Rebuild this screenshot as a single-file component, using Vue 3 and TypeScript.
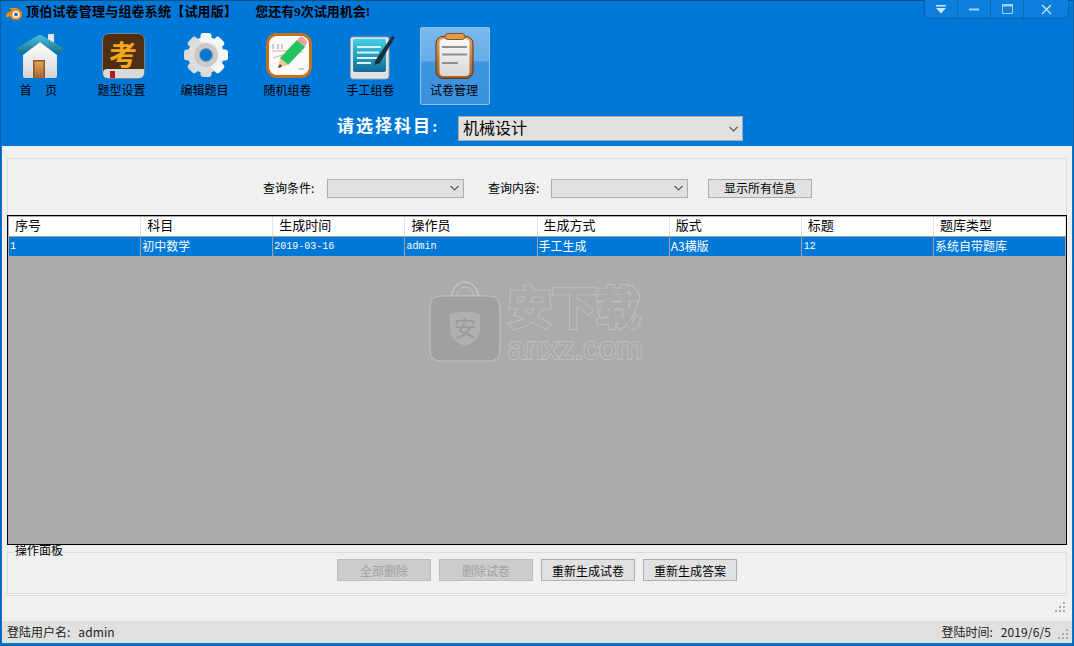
<template>
  <div class="window">
    <header class="head">
      <div class="title-bar">
        <svg class="logo" width="18" height="16" viewBox="0 0 18 16">
          <path d="M1 9 L7 5 L4 3 L10 3 C14 3 17 6 17 9.500 C17 13 14 15 11 15 C8 15 5.500 13.500 5 11 L2.500 12.500 C1 12.500 .5 10 1 9 Z" fill="#f08a12" />
          <circle cx="11" cy="9.500" r="3.500" fill="#fff" />
          <circle cx="11" cy="9.500" r="2" fill="#2a6fb5" />
        </svg>
        <span class="app-name">顶伯试卷管理与组卷系统【试用版】</span>
        <span class="trial">您还有9次试用机会!</span>
        <div class="win-controls">
          <span class="win-btn w32">
            <svg width="12" height="9" viewBox="0 0 12 9"><path d="M1 0h10v1.500H1z" fill="#cfe6fa" /><path d="M1 3h10L6 8.500z" fill="#cfe6fa" /></svg>
          </span>
          <span class="win-btn w32">
            <svg width="10" height="3" viewBox="0 0 10 3"><path d="M0 .5h10v2H0z" fill="#a9d2f3" /></svg>
          </span>
          <span class="win-btn w32">
            <svg width="11" height="10" viewBox="0 0 11 10"><path d="M.5.500h10v9H.5z" fill="none" stroke="#a9d2f3" /><path d="M0 0h11v2.500H0z" fill="#a9d2f3" /></svg>
          </span>
          <span class="win-btn w44">
            <svg width="11" height="11" viewBox="0 0 11 11"><path d="M1 1l9 9M10 1l-9 9" stroke="#cfe6fa" stroke-width="1.300" /></svg>
          </span>
        </div>
      </div>

      <nav class="toolbar">
        <div v-for="item in navItems" :key="item.key" class="tool" :class="{ active: item.key === 'paper' }">
          <svg v-if="item.key === 'home'" class="tool-icon" viewBox="0 0 48 48">
            <defs>
              <linearGradient id="roof" x1="0" y1="0" x2="0" y2="1"><stop offset="0" stop-color="#4fc3dc" /><stop offset="1" stop-color="#0d6a86" /></linearGradient>
              <linearGradient id="wall" x1="0" y1="0" x2="0" y2="1"><stop offset="0" stop-color="#ffffff" /><stop offset="1" stop-color="#d4d4d4" /></linearGradient>
              <linearGradient id="door" x1="0" y1="0" x2="0" y2="1"><stop offset="0" stop-color="#e2a35a" /><stop offset="1" stop-color="#a8642a" /></linearGradient>
            </defs>
            <path d="M32 1h6v14h-6z" fill="#e6e6e6" />
            <path d="M7 22 L24 9 L41 22 V43 Q41 45 39 45 H9 Q7 45 7 43 Z" fill="url(#wall)" />
            <path d="M17 27h12v18H17z" fill="#8c5a2c" />
            <path d="M18.500 28.500h9V45h-9z" fill="url(#door)" />
            <path d="M1 15 L22 2.500 Q24 1.500 26 2.500 L47 15 Q48 17 46 19 L43 22 L24 9 L5 22 L2 19 Q0 17 1 15 Z" fill="url(#roof)" />
          </svg>

          <svg v-else-if="item.key === 'types'" class="tool-icon" viewBox="0 0 48 48">
            <rect x="3" y="0" width="43" height="46" rx="8" fill="#7a8794" />
            <path d="M4 8 Q4 1 10 1 H39 Q45 1 45 8 V36 H4 Z" fill="#4e2f12" />
            <path d="M4 35 H45 V40 Q45 45 40 45 H9 Q4 45 4 40 Z" fill="#d8d8d8" />
            <path d="M4 40 Q4 36 8 36 H45 V34 H4 Z" fill="#4e2f12" />
            <path d="M11 38h5v7h-5z" fill="#b01f1f" />
            <text x="24" y="33" text-anchor="middle" class="kao">考</text>
          </svg>

          <svg v-else-if="item.key === 'edit'" class="tool-icon" viewBox="0 0 48 48">
            <defs>
              <linearGradient id="gear" x1="0" y1="0" x2="0" y2="1"><stop offset="0" stop-color="#fafafa" /><stop offset="1" stop-color="#d8d8d8" /></linearGradient>
            </defs>
            <g fill="url(#gear)">
              <circle cx="24" cy="22" r="18" />
              <rect x="18.500" y="0" width="11" height="44" rx="3" />
              <rect x="18.500" y="0" width="11" height="44" rx="3" transform="rotate(45 24 22)" />
              <rect x="18.500" y="0" width="11" height="44" rx="3" transform="rotate(90 24 22)" />
              <rect x="18.500" y="0" width="11" height="44" rx="3" transform="rotate(135 24 22)" />
            </g>
            <circle cx="24" cy="22" r="12" fill="#cacaca" />
            <circle cx="24" cy="22" r="6.500" fill="#0078d7" stroke="#9a9a9a" />
          </svg>

          <svg v-else-if="item.key === 'random'" class="tool-icon" viewBox="0 0 48 48">
            <rect x="1" y="0" width="46" height="45" rx="11" fill="#c46f1d" />
            <rect x="4" y="3" width="40" height="39" rx="8" fill="#fafafa" />
            <path d="M7 18h16M8 25q10-4 30-6" stroke="#e8a0a0" stroke-width="1" fill="none" />
            <path d="M8 11v5M13 11v5M17 11v5M38 13v3M34 36h5" stroke="#999" stroke-width="1" />
            <path d="M15 25 L32 7 L40 14 L23 32 Z" fill="#22c45e" />
            <path d="M32 7 L35 4 Q37 3 39 5 L42 8 Q43 10 41 11 L40 14 Z" fill="#f0a0a0" />
            <path d="M15 25 L23 32 L13 35 Z" fill="#f3c892" />
            <path d="M13 35 L15 31 L17 33.500 Z" fill="#333" />
          </svg>

          <svg v-else-if="item.key === 'manual'" class="tool-icon" viewBox="0 0 48 48">
            <defs>
              <linearGradient id="screen" x1="0" y1="0" x2="0" y2="1"><stop offset="0" stop-color="#3fd0e8" /><stop offset="1" stop-color="#146a94" /></linearGradient>
            </defs>
            <path d="M2.500 6 Q2.500 4 5 4 H39 Q41 4 41 6 V43 Q41 46 38 46 H5 Q2.500 46 2.500 43 Z" fill="#dfe3e6" stroke="#9aa6ae" />
            <rect x="5" y="6" width="33" height="33" rx="2" fill="url(#screen)" />
            <path d="M9 14h24M9 19.500h22M9 25h20M9 30h14" stroke="#d8f5fb" stroke-width="2" />
            <path d="M27 28 L44 3 L47 4 L32 30 L27 32 Z" fill="#16313d" />
          </svg>

          <svg v-else class="tool-icon" viewBox="0 0 48 48">
            <defs>
              <linearGradient id="board" x1="0" y1="0" x2="0" y2="1"><stop offset="0" stop-color="#e3a45c" /><stop offset="1" stop-color="#a55e26" /></linearGradient>
              <linearGradient id="sheet" x1="0" y1="0" x2="0" y2="1"><stop offset="0" stop-color="#f8f8f8" /><stop offset="1" stop-color="#d8d8d8" /></linearGradient>
            </defs>
            <rect x="5" y="3.500" width="37" height="42" rx="7" fill="url(#board)" stroke="#5d3616" />
            <rect x="8.500" y="6" width="30" height="37" rx="4" fill="url(#sheet)" />
            <rect x="14" y="0.500" width="20" height="6" rx="3" fill="#dd9a48" stroke="#8a5522" />
            <path d="M11 13h25v2H11zM11 20.500h25v2H11zM11 29h16v2H11z" fill="#8f8f8f" />
          </svg>
          <span class="tool-label">{{ item.label }}</span>
        </div>
      </nav>

      <div class="subject-row">
        <span class="subject-label">请选择科目:</span>
        <div class="combo subject-combo">
          <span>机械设计</span>
          <svg width="9" height="6" viewBox="0 0 9 6"><path d="M.5 1l4 4 4-4" fill="none" stroke="#555" stroke-width="1.100" /></svg>
        </div>
      </div>
    </header>

    <main class="content">
      <section class="filter">
        <span class="filter-label">查询条件:</span>
        <div class="combo filter-combo">
          <svg width="9" height="6" viewBox="0 0 9 6"><path d="M.5 1l4 4 4-4" fill="none" stroke="#555" stroke-width="1.100" /></svg>
        </div>
        <span class="filter-label second">查询内容:</span>
        <div class="combo filter-combo">
          <svg width="9" height="6" viewBox="0 0 9 6"><path d="M.5 1l4 4 4-4" fill="none" stroke="#555" stroke-width="1.100" /></svg>
        </div>
        <button class="btn show-all">显示所有信息</button>
      </section>

      <section class="grid">
        <div class="grid-row grid-head">
          <div v-for="col in columns" :key="col" class="cell">{{ col }}</div>
        </div>
        <div class="grid-row grid-item">
          <div v-for="(val, i) in row" :key="i" class="cell" :class="{ mono: monoCols.includes(i) }">{{ val }}</div>
        </div>
        <div class="watermark">
          <svg width="72" height="82" viewBox="0 0 72 82">
            <path d="M22 16 Q26 2 36 2 Q46 2 50 16" fill="none" stroke="#c4c4c4" stroke-width="1.500" />
            <path d="M27 16 Q30 7 36 7 Q42 7 45 16 Z" fill="none" stroke="#c4c4c4" />
            <path d="M12 16 H60 Q71 16 71 27 V70 Q71 81 60 81 H12 Q1 81 1 70 V27 Q1 16 12 16 Z" fill="#a0a0a0" stroke="#c4c4c4" />
            <path d="M21 34 Q36 29 51 34 V50 Q51 60 36 66 Q21 60 21 50 Z" fill="#b0b0b0" />
            <text x="36" y="56" text-anchor="middle" class="wm-glyph">安</text>
          </svg>
          <div class="wm-text">
            <span class="wm-cn" data-text="安下载">安下载</span>
            <span class="wm-en" data-text="anxz.com">anxz.com</span>
          </div>
        </div>
      </section>

      <fieldset class="ops">
        <legend>操作面板</legend>
        <div class="ops-row">
          <button class="btn op" disabled>全部删除</button>
          <button class="btn op" disabled>删除试卷</button>
          <button class="btn op">重新生成试卷</button>
          <button class="btn op">重新生成答案</button>
        </div>
      </fieldset>
      <div class="rule"></div>
      <div class="grip-row">
        <svg width="12" height="12" viewBox="0 0 12 12"><path d="M9 0h2v2H9zM5 4h2v2H5zM9 4h2v2H9zM1 8h2v2H1zM5 8h2v2H5zM9 8h2v2H9z" fill="#a8a8a8" /></svg>
      </div>
    </main>

    <footer class="status">
      <span class="status-text">登陆用户名:<span class="status-val">admin</span></span>
      <span class="status-right">
        <span class="status-text">登陆时间:<span class="status-val">2019/6/5</span></span>
        <svg class="grip" width="12" height="12" viewBox="0 0 12 12"><path d="M9 0h2v2H9zM5 4h2v2H5zM9 4h2v2H9zM1 8h2v2H1zM5 8h2v2H5zM9 8h2v2H9z" fill="#a8a8a8" /></svg>
      </span>
    </footer>
  </div>
</template>

<script setup lang="ts">
interface NavItem {
  key: string;
  label: string;
}

const navItems: NavItem[] = [
  { key: 'home', label: '首     页' },
  { key: 'types', label: '题型设置' },
  { key: 'edit', label: '编辑题目' },
  { key: 'random', label: '随机组卷' },
  { key: 'manual', label: '手工组卷' },
  { key: 'paper', label: '试卷管理' },
];

const columns: string[] = ['序号', '科目', '生成时间', '操作员', '生成方式', '版式', '标题', '题库类型'];
const row: string[] = ['1', '初中数学', '2019-03-16', 'admin', '手工生成', 'A3横版', '12', '系统自带题库'];
const monoCols: number[] = [0, 2, 3, 6];
</script>

<style>
html,
body {
  margin: 0;
  overflow: hidden;
}
</style>

<style scoped>
.window {
  width: 1074px;
  height: 646px;
  box-sizing: border-box;
  display: flex;
  flex-direction: column;
  background: #0078d7;
  border: 1px solid #0a5fa8;
  border-top-color: #0b4f88;
  padding: 0 1px 2px;
  font-family: "Noto Sans CJK SC", "Liberation Sans", sans-serif;
  font-size: 12px;
  color: #000;
}

.head {
  height: 145px;
  flex-shrink: 0;
}

.title-bar {
  height: 26px;
  display: flex;
  align-items: flex-start;
  position: relative;
}

.logo {
  margin: 4px 0 0 3px;
}

.app-name,
.trial {
  font-family: "Liberation Serif", "Noto Sans CJK SC", serif;
  font-weight: 700;
  font-size: 13px;
  line-height: 22px;
  color: #000;
}

.app-name {
  margin-left: 3px;
  letter-spacing: 0.2px;
  white-space: nowrap;
}

.trial {
  margin-left: 18px;
}

.win-controls {
  position: absolute;
  top: -1px;
  right: 3px;
  height: 18px;
  display: flex;
  border: 1px solid #0a62ad;
  border-top: none;
  border-radius: 0 0 6px 6px;
  background: #0c7fdc;
}

.win-btn {
  display: flex;
  align-items: center;
  justify-content: center;
  border-right: 1px solid #0a68b6;
}

.win-btn:last-child {
  border-right: none;
}

.w32 {
  width: 32px;
}

.w44 {
  width: 44px;
}

.toolbar {
  display: flex;
  gap: 13px;
  padding-left: 3px;
  height: 80px;
}

.tool {
  width: 70px;
  height: 78px;
  box-sizing: border-box;
  padding-top: 6px;
  display: flex;
  flex-direction: column;
  align-items: center;
  border-radius: 3px;
}

.tool.active {
  background: linear-gradient(#7ab8ec 0%, #68ade8 44%, #3f95e0 44.500%, #3a90dc 100%);
  box-shadow: inset 0 0 0 1px #8fc4ef;
}

.tool-icon {
  width: 48px;
  height: 48px;
}

.tool-label {
  font-size: 12px;
  line-height: 16px;
  padding-top: 1px;
  margin-left: -3px;
  white-space: pre;
}

.tool.active .tool-label {
  margin-left: -2px;
}

.kao {
  font-family: "Noto Sans CJK SC", sans-serif;
  font-size: 28px;
  font-weight: 700;
  fill: #f5a81c;
}

.subject-row {
  display: flex;
  align-items: center;
  margin-top: 9px;
  padding-left: 335px;
}

.subject-label {
  width: 121px;
  font-family: "Liberation Serif", "Noto Sans CJK SC", serif;
  font-size: 17px;
  font-weight: 700;
  letter-spacing: 2px;
  line-height: 21px;
  padding-bottom: 4px;
  color: #fff;
}

.combo {
  box-sizing: border-box;
  display: flex;
  align-items: center;
  justify-content: space-between;
  background: #e1e1e1;
  border: 1px solid #adadad;
}

.subject-combo {
  width: 285px;
  height: 25px;
  padding: 0 4px;
  font-size: 16px;
}

.subject-combo span {
  line-height: 20px;
  padding-bottom: 3px;
}

.content {
  flex: 1;
  display: flex;
  flex-direction: column;
  background: #f0f0f0;
  padding: 12px 5px 0;
  min-height: 0;
}

.filter {
  height: 57px;
  box-sizing: border-box;
  flex-shrink: 0;
  display: flex;
  align-items: center;
  justify-content: center;
  border: 1px solid #dcdcdc;
  border-bottom: none;
  padding: 2px 0 0 1px;
}

.filter-label {
  width: 64px;
  padding-bottom: 1px;
}

.filter-label.second {
  width: 63px;
  margin-left: 24px;
}

.filter-combo {
  width: 137px;
  height: 19px;
  justify-content: flex-end;
  padding-right: 4px;
}

.btn {
  box-sizing: border-box;
  background: #e1e1e1;
  border: 1px solid #adadad;
  font-family: inherit;
  font-size: 12px;
  color: #000;
  padding: 0;
}

.btn:disabled {
  background: #cccccc;
  border-color: #bfbfbf;
  color: #a0a0a0;
}

.show-all {
  width: 104px;
  height: 19px;
  margin-left: 20px;
  line-height: 14px;
}

.grid {
  position: relative;
  height: 330px;
  flex-shrink: 0;
  box-sizing: border-box;
  background: #ababab;
  border: 1px solid #000;
  padding: 1px 0 1px 1px;
}

.grid-row {
  display: grid;
  grid-template-columns: repeat(8, 132.150px);
}

.grid-head {
  height: 19px;
  background: #fff;
  font-size: 13px;
  border-bottom: 1px solid #a0a0a0;
}

.grid-head .cell {
  padding-left: 6px;
  line-height: 16px;
  border-right: 1px solid #e4e4e4;
}

.grid-item {
  height: 19px;
  background: #0078d7;
  color: #fff;
}

.grid-item .cell {
  padding-left: 1px;
  line-height: 18px;
  border-right: 1px solid #a0a0a0;
}

.cell {
  box-sizing: border-box;
  white-space: nowrap;
}

.grid-item .cell.mono {
  font-family: "Liberation Mono", monospace;
  font-size: 10px;
  line-height: 20px;
}

.grid-item .cell.mono:nth-child(7) {
  padding-left: 2px;
}

.watermark {
  position: absolute;
  left: 421px;
  top: 64px;
  display: flex;
  gap: 7px;
}

.wm-glyph {
  font-family: "Noto Sans CJK SC", sans-serif;
  font-size: 22px;
  fill: #9a9a9a;
}

.wm-text {
  display: flex;
  flex-direction: column;
  width: 136px;
}

.wm-cn,
.wm-en {
  position: relative;
  color: #ababab;
  white-space: nowrap;
}

.wm-cn {
  font-family: "Noto Sans CJK SC", sans-serif;
  font-size: 44px;
  font-weight: 400;
  height: 54px;
  line-height: 50px;
  -webkit-text-stroke: 4.500px #c6c6c6;
}

.wm-en {
  font-family: "Liberation Sans", sans-serif;
  font-size: 31.500px;
  line-height: 28px;
  -webkit-text-stroke: 2px #c6c6c6;
}

.wm-cn::after,
.wm-en::after {
  content: attr(data-text);
  position: absolute;
  left: 0;
  top: 0;
  color: #ababab;
}

.wm-cn::after {
  -webkit-text-stroke: 3px #ababab;
}

.wm-en::after {
  -webkit-text-stroke: 0.500px #ababab;
}

.ops {
  height: 49px;
  box-sizing: border-box;
  flex-shrink: 0;
  margin: 0;
  padding: 0;
  border: 1px solid #dcdcdc;
  min-width: 0;
}

.ops legend {
  margin-left: 6px;
  padding: 0 1px 4px;
  font-size: 12px;
  line-height: 10px;
}

.ops-row {
  display: flex;
  justify-content: center;
  gap: 8px;
}

.op {
  width: 94px;
  height: 22px;
  line-height: 17px;
}

.rule {
  height: 1px;
  background: #dcdcdc;
  margin-top: 1px;
  flex-shrink: 0;
}

.grip-row {
  display: flex;
  justify-content: flex-end;
  padding: 6px 1px 0 0;
}

.status {
  height: 22px;
  flex-shrink: 0;
  display: flex;
  align-items: center;
  justify-content: space-between;
  background: #e0e0e0;
  padding: 0 3px 0 5px;
  font-size: 12px;
  color: #222;
}

.status-text {
  padding-bottom: 2px;
}

.status-val {
  margin-left: 8px;
  letter-spacing: 0.1px;
}

.status-right {
  display: flex;
  align-items: center;
  gap: 6px;
  align-self: stretch;
}

.grip {
  align-self: flex-end;
  margin-bottom: 2px;
}
</style>
